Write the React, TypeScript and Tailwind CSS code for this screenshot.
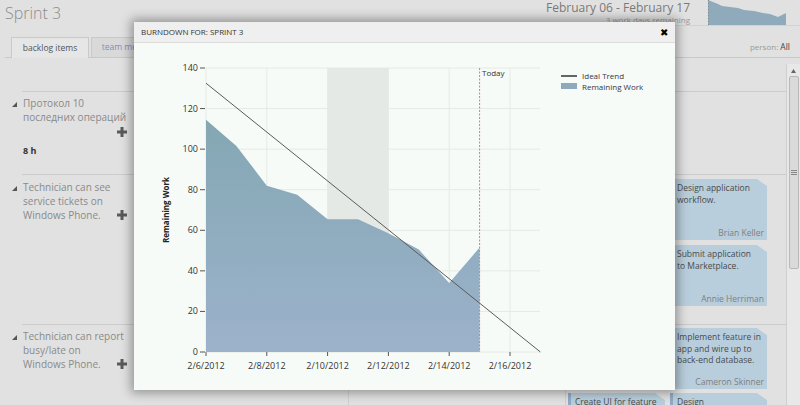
import React from "react";

const x0 = 206;
const y0 = 352;
const dayW = 30.4;
const unit = 284 / 140;
const xd = (d: number) => x0 + d * dayW;
const yv = (v: number) => y0 - v * unit;

// remaining work per day, 2/6 .. 2/15
const remaining = [114.5, 101.5, 82, 77.5, 65.5, 65.5, 58.5, 50.5, 34, 51.5];
const dateLabels = ["2/6/2012", "2/8/2012", "2/10/2012", "2/12/2012", "2/14/2012", "2/16/2012"];
const yTicks = [0, 20, 40, 60, 80, 100, 120, 140];

function Burndown() {
  const area =
    `M${x0},${y0} ` +
    remaining.map((v, i) => `L${xd(i)},${yv(v)}`).join(" ") +
    ` L${xd(9)},${y0} Z`;

  return (
    <svg width={541} height={347} viewBox="134 43 541 347" className="block">
      <defs>
        <linearGradient id="rw" x1="0" y1="0" x2="0" y2="1">
          <stop offset="0" stopColor="#84a7b3" />
          <stop offset="1" stopColor="#9cb2cb" />
        </linearGradient>
      </defs>

      {/* non working days */}
      <rect x={xd(4)} y={68} width={dayW * 2} height={284} fill="#e5e9e5" />

      {/* grid */}
      {yTicks.map((v) => (
        <line key={"h" + v} x1={x0} x2={540} y1={yv(v)} y2={yv(v)} stroke="#e4eae4" />
      ))}
      {[0, 2, 4, 6, 8, 10].map((d) => (
        <line key={"v" + d} x1={xd(d)} x2={xd(d)} y1={68} y2={y0} stroke="#e4eae4" />
      ))}

      <path d={area} fill="url(#rw)" />

      {/* today */}
      <line x1={xd(9)} x2={xd(9)} y1={68} y2={y0} stroke="#e07878" strokeDasharray="2 1.5" />
      <text x={482} y={76} fontSize={8} fill="#333">
        Today
      </text>

      {/* ideal trend */}
      <line x1={x0} y1={yv(132.5)} x2={xd(11)} y2={y0} stroke="#5a5a5a" strokeWidth={1} />

      {/* y axis */}
      {yTicks.map((v) => (
        <g key={"t" + v}>
          <line x1={200} x2={205} y1={yv(v)} y2={yv(v)} stroke="#555" />
          <text x={198} y={yv(v) + 3} fontSize={9} textAnchor="end" fill="#333">
            {v}
          </text>
        </g>
      ))}
      <text
        x={169}
        y={210}
        fontSize={8}
        fontWeight={700}
        textAnchor="middle"
        fill="#222"
        transform="rotate(-90 169 210)"
      >
        Remaining Work
      </text>

      {/* x axis */}
      {dateLabels.map((l, i) => (
        <g key={l}>
          <line x1={xd(i * 2)} x2={xd(i * 2)} y1={y0} y2={y0 + 4} stroke="#555" />
          <text x={xd(i * 2)} y={369} fontSize={9} textAnchor="middle" fill="#333">
            {l}
          </text>
        </g>
      ))}

      {/* legend */}
      <line x1={561} x2={577} y1={76} y2={76} stroke="#333" strokeWidth={1.5} />
      <text x={582} y={79} fontSize={8} fill="#353548">
        Ideal Trend
      </text>
      <rect x={561} y={83} width={16} height={6} fill="#8fa9bc" />
      <text x={582} y={90} fontSize={8} fill="#353548">
        Remaining Work
      </text>
    </svg>
  );
}

function MiniChart() {
  return (
    <svg width={78} height={25} className="block">
      <path
        d="M0,0 L10,4 L14,6 L22,7 L30,8 L36,10 L46,11 L55,13 L62,14 L70,17 L78,13 L78,25 L0,25 Z"
        fill="#8eaabb"
      />
      <line x1={0.5} x2={0.5} y1={0} y2={25} stroke="#888" strokeDasharray="1 2" />
    </svg>
  );
}

function Tri() {
  return (
    <svg width={5} height={5} className="block">
      <polygon points="5,0 5,5 0,5" fill="#555" />
    </svg>
  );
}

function PlusIcon() {
  return (
    <svg width={10} height={10} className="block">
      <path d="M3.5 0h3v3.5h3.5v3h-3.5v3.5h-3v-3.5h-3.5v-3h3.5z" fill="#5a5a5a" />
    </svg>
  );
}

function Card({ lines, name }: { lines: string[]; name: string }) {
  return (
    <div className="flex h-[61px] w-[97px] flex-col justify-between border-l-[3px] border-[#8fabc4] bg-[#b9cedc] pb-[2px] pl-[4px] pr-[3px] pt-[3px] [clip-path:polygon(0_0,87px_0,100%_7px,100%_100%,0_100%)]">
      <div className="text-[8.5px] leading-[11.5px] text-[#4a4a4a]">
        {lines.map((l) => (
          <div key={l}>{l}</div>
        ))}
      </div>
      <div className="text-right text-[8.5px] leading-[11px] text-[#7f7f7f]">{name}</div>
    </div>
  );
}

function Story({ lines, inline }: { lines: string[]; inline: boolean }) {
  const last = lines[lines.length - 1];
  return (
    <div className="flex">
      <div className="-ml-[11px] w-[11px] pt-[6px]">
        <Tri />
      </div>
      <div className="w-[104px] text-[10px] leading-[14px] text-[#8a8a8a]">
        {lines.slice(0, -1).map((l) => (
          <div key={l}>{l}</div>
        ))}
        {inline ? (
          <div className="flex items-center justify-between">
            <span>{last}</span>
            <PlusIcon />
          </div>
        ) : (
          <div>{last}</div>
        )}
      </div>
    </div>
  );
}

export default function App() {
  return (
    <div className="relative h-[405px] w-[800px] overflow-hidden bg-[#e1e1e1] font-['Open_Sans',sans-serif]">
      {/* page header */}
      <div className="flex h-[26px]">
        <div className="pl-[5px] pt-[3px] text-[16px] font-light leading-[20px] text-[#8c8c8c]">Sprint 3</div>
        <div className="ml-auto flex w-[300px] justify-end border-b border-[#d2d2d2]">
          <div className="mr-[18px] text-right">
            <div className="text-[12px] leading-[15px] text-[#7a7a7a]">February 06 - February 17</div>
            <div className="text-[8px] leading-[9px] text-[#9a9a9a]">3 work days remaining</div>
          </div>
          <MiniChart />
          <div className="w-[14px]" />
        </div>
      </div>

      {/* tabs */}
      <div className="ml-[5px] mt-[11px] flex h-[21px] border-b border-[#c9c9c9]">
        <div className="-mb-px ml-[6px] flex w-[78px] items-center justify-center border border-b-0 border-[#c9c9c9] bg-[#e6e6e6] text-[8.5px] text-[#555]">
          backlog items
        </div>
        <div className="ml-[2px] flex w-[82px] items-center justify-center border border-b-0 border-[#c9c9c9] bg-[#d9d9d9] text-[8.5px] text-[#7b8fc6]">
          team members
        </div>
        <div className="ml-auto mr-[10px] self-center text-[8px] text-[#999]">
          person: <span className="text-[8.5px] text-[#444]">All</span>
        </div>
      </div>

      {/* board */}
      <div className="flex">
        <div className="w-[786px]">
          <div className="flex h-[33px]">
            <div className="w-[348px]" />
            <div className="w-[217px] border-l border-[#d0d0d0]" />
            <div className="w-[221px] border-l border-[#d0d0d0]" />
          </div>

          <div className="flex h-[83px]">
            <div className="w-[348px] pl-[22px]">
              <div className="h-full border-t border-[#cbcbcb] pl-[1px] pt-[4px]">
                <Story lines={["Протокол 10", "последних операций"]} inline={false} />
                <div className="mt-[3px] flex w-[104px] justify-end">
                  <PlusIcon />
                </div>
                <div className="mt-[8px] text-[9px] font-bold leading-[12px] text-[#333]">8 h</div>
              </div>
            </div>
            <div className="w-[217px] border-l border-[#d0d0d0]">
              <div className="h-full border-t border-[#cbcbcb]" />
            </div>
            <div className="w-[221px] border-l border-[#d0d0d0]">
              <div className="h-full border-t border-[#cbcbcb]" />
            </div>
          </div>

          <div className="flex h-[150px]">
            <div className="w-[348px] pl-[22px]">
              <div className="h-full border-t border-[#cbcbcb] pl-[1px] pt-[5px]">
                <Story lines={["Technician can see", "service tickets on", "Windows Phone."]} inline />
              </div>
            </div>
            <div className="w-[217px] border-l border-[#d0d0d0]">
              <div className="h-full border-t border-[#cbcbcb]" />
            </div>
            <div className="w-[221px] border-l border-[#d0d0d0]">
              <div className="flex h-full flex-wrap content-start gap-x-[5px] gap-y-[5px] border-t border-[#cbcbcb] pl-[2px] pt-[4px]">
                <Card lines={["Create mockups for", "service tickets."]} name="Brian Keller" />
                <Card lines={["Design application", "workflow."]} name="Brian Keller" />
                <Card lines={["Test on device."]} name="Annie Herriman" />
                <Card lines={["Submit application", "to Marketplace."]} name="Annie Herriman" />
              </div>
            </div>
          </div>

          <div className="flex h-[90px]">
            <div className="w-[348px] pl-[22px]">
              <div className="h-full border-t border-[#cbcbcb] pl-[1px] pt-[4px]">
                <Story lines={["Technician can report", "busy/late on", "Windows Phone."]} inline />
              </div>
            </div>
            <div className="w-[217px] border-l border-[#d0d0d0]">
              <div className="h-full border-t border-[#cbcbcb]" />
            </div>
            <div className="w-[221px] border-l border-[#d0d0d0]">
              <div className="flex h-full flex-wrap content-start gap-x-[5px] gap-y-[4px] border-t border-[#cbcbcb] pl-[2px] pt-[3px]">
                <Card lines={["Add status page."]} name="Cameron Skinner" />
                <Card
                  lines={["Implement feature in", "app and wire up to", "back-end database."]}
                  name="Cameron Skinner"
                />
                <Card lines={["Create UI for feature", "in app."]} name="Brian Keller" />
                <Card lines={["Design", "notification flow."]} name="Brian Keller" />
              </div>
            </div>
          </div>
        </div>

        {/* scrollbar */}
        <div className="mt-[6px] flex h-[345px] w-[14px] flex-col items-center border-l border-[#cfcfcf] bg-[#e8e8e8]">
          <svg width={5} height={4} className="mt-[5px] block">
            <polygon points="2.5,0 5,4 0,4" fill="#666" />
          </svg>
          <div className="mt-[3px] flex h-[193px] w-[10px] items-center justify-center rounded-[2px] border border-[#b8b8b8] bg-[#dadada]">
            <svg width={6} height={5} className="block">
              <path d="M0 0.5h6M0 2.5h6M0 4.5h6" stroke="#888" />
            </svg>
          </div>
        </div>
      </div>

      {/* burndown dialog */}
      <div className="absolute left-[134px] top-[22px] h-[368px] w-[541px] bg-[#f7fbf7] shadow-[0_0_10px_3px_rgba(0,0,0,0.35)]">
        <div className="flex h-[21px] items-center justify-between border-b border-[#dcdcdc] bg-[#efefef] px-[7px]">
          <span className="text-[8px] text-[#333]">BURNDOWN FOR: SPRINT 3</span>
          <span className="text-[10px] leading-none text-black">✖</span>
        </div>
        <Burndown />
      </div>
    </div>
  );
}
